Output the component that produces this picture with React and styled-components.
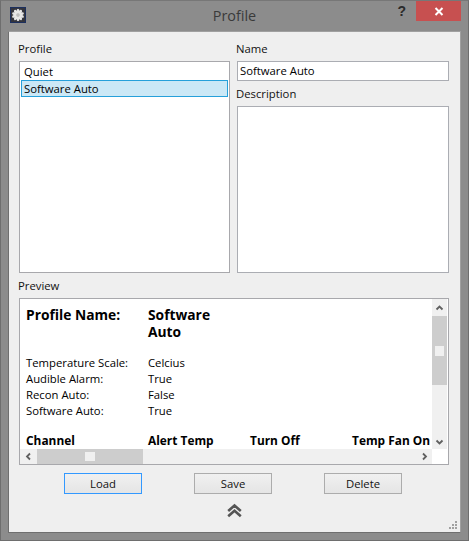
import React from 'react'
import styled, { createGlobalStyle } from 'styled-components'

const Global = createGlobalStyle`
  html, body { margin: 0; padding: 0; background: #8c8c8c; }
  * { box-sizing: border-box; }
`

const Win = styled.div`
  width: 469px;
  height: 541px;
  background: #8c8c8c;
  border: 1px solid #6e6e6e;
  border-top-color: #777;
  display: flex;
  flex-direction: column;
  font-family: "Open Sans", "Noto Sans", sans-serif;
  font-size: 11.3px;
  color: #000;
  overflow: hidden;
`
const TitleBar = styled.div`
  height: 29px;
  flex: none;
  display: flex;
  align-items: flex-start;
  position: relative;
  padding-left: 9px;
  margin-bottom: 1px;
`
const AppIcon = styled.svg`
  width: 16px;
  height: 16px;
  margin-top: 6px;
  display: block;
`
const Title = styled.div`
  position: absolute;
  left: 0;
  right: 0;
  top: 3px;
  text-align: center;
  font-size: 14.4px;
  line-height: 24px;
  color: #3a3a3a;
`
const Help = styled.div`
  margin-left: auto;
  margin-right: 10px;
  font-family: "Liberation Sans", sans-serif;
  font-weight: 700;
  font-size: 14px;
  line-height: 20px;
  color: #2a2a2a;
`
const Close = styled.div`
  width: 45px;
  height: 20px;
  margin-right: 7px;
  background: #c75050;
  display: flex;
  align-items: center;
  justify-content: center;
`
const Panel = styled.div`
  flex: 1;
  margin: 0 7px 7px 7px;
  background: #efefef;
  border: 1px solid #707070;
  border-color: #a0a0a0 #a0a0a0 #6f6f6f #6f6f6f;
  padding: 10px 9px 0 9px;
  display: flex;
  flex-direction: column;
  position: relative;
`
const TopRow = styled.div`
  display: grid;
  grid-template-columns: 212px 213px;
  column-gap: 6px;
  height: 231px;
`
const Col = styled.div`
  display: flex;
  flex-direction: column;
  min-width: 0;
`
const Label = styled.div`
  height: 13px;
  line-height: 13px;
  margin-top: ${p => p.$mt || 0}px;
  margin-bottom: ${p => p.$mb || 6}px;
  white-space: nowrap;
  color: #111;
`
const ListBox = styled.div`
  flex: 1;
  margin-left: 1px;
  background: #fff;
  border: 1px solid #a8a8ac;
  padding: 1px;
`
const ListItem = styled.div`
  height: 17px;
  line-height: 15px;
  padding-left: 2px;
  border: 1px solid ${p => (p.$selected ? '#26a0da' : 'transparent')};
  background: ${p => (p.$selected ? '#cbe8f6' : 'transparent')};
`
const NameInput = styled.div`
  height: 20px;
  margin-left: 1px;
  background: #fff;
  border: 1px solid #abadb3;
  line-height: 18px;
  padding-left: 2px;
`
const TextArea = styled.div`
  flex: 1;
  margin-left: 1px;
  background: #fff;
  border: 1px solid #abadb3;
`
const PreviewBox = styled.div`
  height: 167px;
  width: 430px;
  margin-left: 1px;
  background: #fff;
  border: 1px solid #a8a8ac;
  display: grid;
  grid-template-columns: 412px 15px 1fr;
  grid-template-rows: 150px 15px;
`
const PreviewBody = styled.div`
  overflow: hidden;
  padding: 7px 0 0 6px;
`
const InfoGrid = styled.div`
  display: grid;
  grid-template-columns: 122px 102px 102px auto;
  white-space: nowrap;
`
const Big = styled.div`
  font-weight: 700;
  font-size: 13.8px;
  line-height: 17px;
  white-space: normal;
  color: #000;
  grid-column: ${p => p.$span || 'auto'};
  width: ${p => p.$w || 'auto'};
  margin-bottom: 15px;
`
const Cell = styled.div`
  line-height: 16px;
  grid-column: ${p => p.$col || 'auto'};
`
const Head = styled.div`
  font-weight: 700;
  font-size: 11.9px;
  line-height: 16px;
  color: #000;
  margin-top: 13px;
  grid-column: ${p => p.$col || 'auto'};
`
const ScrollV = styled.div`
  grid-column: 2;
  grid-row: 1;
  background: #f0f0f0;
  display: flex;
  flex-direction: column;
`
const ScrollH = styled.div`
  grid-column: 1;
  grid-row: 2;
  background: #f0f0f0;
  display: flex;
  align-items: stretch;
`
const Arrow = styled.div`
  flex: none;
  width: ${p => p.$w || 15}px;
  height: ${p => p.$h || 15}px;
  display: flex;
  align-items: center;
  justify-content: center;
`
const ThumbV = styled.div`
  height: 69px;
  background: #cdcdcd;
  display: flex;
  align-items: center;
  justify-content: center;
`
const ThumbH = styled.div`
  width: 106px;
  background: #cdcdcd;
  display: flex;
  align-items: center;
  justify-content: center;
`
const Grip = styled.div`
  width: ${p => p.$w}px;
  height: ${p => p.$h}px;
  background: #f0f0f0;
`
const Spacer = styled.div`
  flex: 1;
`
const Buttons = styled.div`
  display: flex;
  justify-content: space-between;
  padding: 0 49px 0 46px;
  margin-top: 8px;
`
const Btn = styled.div`
  width: 78px;
  height: 21px;
  border: 1px solid ${p => (p.$focus ? '#3399ff' : '#acacac')};
  background: linear-gradient(#f0f0f0, #e5e5e5);
  text-align: center;
  line-height: 19px;
  color: #111;
`
const Collapse = styled.svg`
  display: block;
  width: 15px;
  height: 15px;
  margin: 9px auto 0;
`
const SizeGrip = styled.svg`
  position: absolute;
  right: 2px;
  bottom: 2px;
  width: 9px;
  height: 9px;
`

const blades = Array.from({ length: 10 }, (_, i) => i * 36)

function FanIcon() {
  return (
    <AppIcon viewBox="0 0 16 16">
      <rect x="0.5" y="0.5" width="15" height="15" fill="#33343c" stroke="#1c2f5e" />
      {blades.map(a => (
        <ellipse key={a} cx="8" cy="4.4" rx="1.5" ry="2.6" fill="#e6e6e6" transform={`rotate(${a} 8 8)`} />
      ))}
      <circle cx="8" cy="8" r="1.8" fill="#bdbdbd" />
    </AppIcon>
  )
}

function Chev({ d }) {
  const paths = {
    up: 'M1.5 6.5 L4.5 3.5 L7.5 6.5',
    down: 'M1.5 3.5 L4.5 6.5 L7.5 3.5',
    left: 'M6 1.5 L3 4.5 L6 7.5',
    right: 'M3 1.5 L6 4.5 L3 7.5',
  }
  return (
    <svg width="9" height="9" viewBox="0 0 9 9">
      <path d={paths[d]} fill="none" stroke="#606060" strokeWidth="1.8" />
    </svg>
  )
}

export default function App() {
  return (
    <Win>
      <Global />
      <TitleBar>
        <FanIcon />
        <Title>Profile</Title>
        <Help>?</Help>
        <Close>
          <svg width="10" height="9" viewBox="0 0 10 9">
            <path d="M1.5 1 L8.5 8 M8.5 1 L1.5 8" stroke="#fff" strokeWidth="2" />
          </svg>
        </Close>
      </TitleBar>
      <Panel>
        <TopRow>
          <Col>
            <Label>Profile</Label>
            <ListBox>
              <ListItem>Quiet</ListItem>
              <ListItem $selected>Software Auto</ListItem>
            </ListBox>
          </Col>
          <Col>
            <Label>Name</Label>
            <NameInput>Software Auto</NameInput>
            <Label $mt={6}>Description</Label>
            <TextArea />
          </Col>
        </TopRow>
        <Label $mt={6}>Preview</Label>
        <PreviewBox>
          <PreviewBody>
            <InfoGrid>
              <Big>Profile Name:</Big>
              <Big $span="2 / span 2" $w="80px">Software Auto</Big>
              <Cell $col="1">Temperature Scale:</Cell>
              <Cell $col="2">Celcius</Cell>
              <Cell $col="1">Audible Alarm:</Cell>
              <Cell $col="2">True</Cell>
              <Cell $col="1">Recon Auto:</Cell>
              <Cell $col="2">False</Cell>
              <Cell $col="1">Software Auto:</Cell>
              <Cell $col="2">True</Cell>
              <Head $col="1">Channel</Head>
              <Head $col="2">Alert Temp</Head>
              <Head $col="3">Turn Off</Head>
              <Head $col="4">Temp Fan On</Head>
            </InfoGrid>
          </PreviewBody>
          <ScrollV>
            <Arrow $h={17}><Chev d="up" /></Arrow>
            <ThumbV><Grip $w={9} $h={10} /></ThumbV>
            <Spacer />
            <Arrow $h={15}><Chev d="down" /></Arrow>
          </ScrollV>
          <ScrollH>
            <Arrow $w={17}><Chev d="left" /></Arrow>
            <ThumbH><Grip $w={10} $h={9} /></ThumbH>
            <Spacer />
            <Arrow $w={15}><Chev d="right" /></Arrow>
          </ScrollH>
        </PreviewBox>
        <Buttons>
          <Btn $focus>Load</Btn>
          <Btn>Save</Btn>
          <Btn>Delete</Btn>
        </Buttons>
        <Collapse viewBox="0 0 15 15">
          <path d="M1.2 8 L7.5 2.5 L13.8 8 M1.2 13.2 L7.5 7.7 L13.8 13.2" fill="none" stroke="#555" strokeWidth="2.6" />
        </Collapse>
        <SizeGrip viewBox="0 0 9 9">
          <g fill="#a0a0a0">
            <rect x="6" y="0" width="2" height="2" />
            <rect x="3" y="3" width="2" height="2" />
            <rect x="6" y="3" width="2" height="2" />
            <rect x="0" y="6" width="2" height="2" />
            <rect x="3" y="6" width="2" height="2" />
            <rect x="6" y="6" width="2" height="2" />
          </g>
        </SizeGrip>
      </Panel>
    </Win>
  )
}
